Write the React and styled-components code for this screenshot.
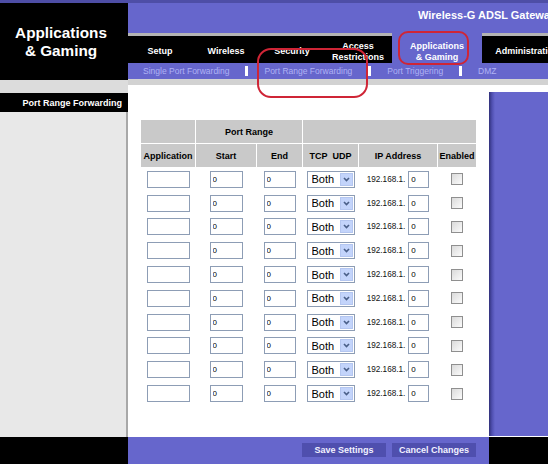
import React from 'react'
import styled, { createGlobalStyle } from 'styled-components'

const colors = {
  purple: '#6666cc',
  lavender: '#b0b2f4',
  black: '#000000',
  tabLine: '#b4b4b4',
  headGrey: '#c9c9c9',
  field: '#8d9db5',
  mark: '#cf2536',
}

const font = `'Liberation Sans', Arial, sans-serif`

const GlobalStyle = createGlobalStyle`
  html, body {
    margin: 0;
    padding: 0;
    background: #fff;
  }

  body {
    font-family: ${font};
  }
`

const SPage = styled.div`
  position: relative;
  width: 548px;
  height: 464px;
  overflow: hidden;
  display: flex;
  flex-direction: column;
`

const STopStrip = styled.div`
  height: 3px;
  flex: none;
  background: #4e4ea6;
`

const SColumns = styled.div`
  flex: 1;
  min-height: 0;
  display: flex;
`

const SSidebar = styled.aside`
  width: 128px;
  flex: none;
  display: flex;
  flex-direction: column;
`

const SSidebarTitle = styled.h1`
  margin: 0;
  height: 77px;
  box-sizing: border-box;
  padding: 21px 6px 0 0;
  background: ${colors.black};
  color: #fff;
  font-size: 15.3px;
  line-height: 18px;
  font-weight: bold;
  text-align: center;
`

const SSidebarGap = styled.div`
  height: 13px;
  background: #dcdcdc;
`

const SSidebarHeading = styled.div`
  height: 19px;
  display: flex;
  align-items: center;
  justify-content: flex-end;
  padding-right: 6px;
  background: ${colors.black};
  color: #fff;
  font-size: 9px;
  font-weight: bold;
`

const SSidebarFill = styled.div`
  flex: 1;
  box-sizing: border-box;
  background: #e8e8e8;
  border-right: 2px solid #a8a8a8;
`

const SSidebarFoot = styled.div`
  height: 27px;
  background: ${colors.black};
`

const SMain = styled.div`
  flex: 1;
  min-width: 0;
  display: flex;
  flex-direction: column;
  overflow: hidden;
`

const SBrandBar = styled.div`
  height: 30px;
  flex: none;
  box-sizing: border-box;
  padding: 6px 0 0 290px;
  background: ${colors.purple};
  color: #fff;
  font-size: 11px;
  line-height: 13px;
  font-weight: bold;
  white-space: nowrap;
`

const STabRow = styled.nav`
  height: 30px;
  flex: none;
  display: flex;
  background: ${colors.purple};
`

const STab = styled.div`
  width: ${({ $w }) => $w}px;
  flex: none;
  box-sizing: border-box;
  display: flex;
  align-items: center;
  justify-content: center;
  padding-top: 4px;
  border-top: 3px solid ${({ $active }) => ($active ? 'transparent' : colors.tabLine)};
  background: ${({ $active }) => ($active ? colors.purple : colors.black)};
  color: #fff;
  font-size: 9px;
  line-height: 11px;
  font-weight: bold;
  text-align: center;
  white-space: nowrap;
`

const SSubNav = styled.div`
  height: 16px;
  flex: none;
  display: flex;
  align-items: center;
  gap: 16px;
  padding-left: 15px;
  background: ${colors.purple};
  color: ${colors.lavender};
  font-size: 8.5px;
  white-space: nowrap;
`

const SSubSep = styled.span`
  width: 3px;
  height: 10px;
  flex: none;
  background: #fff;
`

const SGreyStrip = styled.div`
  height: 6px;
  flex: none;
  background: #d2d2d2;
`

const SBody = styled.div`
  flex: 1;
  min-height: 0;
  display: flex;
`

const SContent = styled.main`
  width: 361px;
  flex: none;
  box-sizing: border-box;
  padding: 35px 0 0 13px;
  background: #fff;
`

const SRail = styled.div`
  flex: 1;
  display: flex;
  padding: 7px 0 1px;
  background: #fff;
`

const SRailPanel = styled.div`
  flex: 1;
  background: linear-gradient(to right, #30307a 0, #4f4fb0 3px, ${colors.purple} 6px);
`

const SFooter = styled.footer`
  height: 27px;
  flex: none;
  display: flex;
`

const SActions = styled.div`
  width: 361px;
  flex: none;
  box-sizing: border-box;
  display: flex;
  align-items: flex-start;
  justify-content: flex-end;
  gap: 6px;
  padding: 6px 13px 0 0;
  background: ${colors.purple};
`

const SButton = styled.button`
  width: 84px;
  height: 14px;
  padding: 0;
  border: none;
  background: #4f4fae;
  color: #f2f2ff;
  font: bold 9px ${font};
`

const SFooterEnd = styled.div`
  flex: 1;
  background: ${colors.black};
`

const STable = styled.div`
  display: grid;
  grid-template-columns: 54px 60px 45px 55px 78px 38px;
  grid-template-rows: 23px 23px;
  grid-auto-rows: 22.8px;
  gap: 1px;
  width: max-content;
`

const SHeadCell = styled.div`
  grid-column: span ${({ $span }) => $span || 1};
  display: flex;
  align-items: center;
  justify-content: center;
  background: ${colors.headGrey};
  font-size: 9px;
  font-weight: bold;
  white-space: nowrap;
`

const SCell = styled.div`
  display: flex;
  align-items: center;
  justify-content: center;
  gap: 3px;
`

const STextInput = styled.input`
  width: ${({ $w }) => $w}px;
  height: 17px;
  box-sizing: border-box;
  margin: 0;
  padding: 0 0 0 2px;
  border: 1px solid ${colors.field};
  background: #fff;
  color: #000;
  font: 8px ${font};
  outline: none;
`

const SSelectBox = styled.div`
  width: 48px;
  height: 17px;
  box-sizing: border-box;
  display: flex;
  align-items: center;
  border: 1px solid ${colors.field};
  background: #fff;
`

const SSelect = styled.select`
  flex: 1;
  min-width: 0;
  height: 100%;
  appearance: none;
  margin: 0;
  padding: 0 0 0 4px;
  border: none;
  background: transparent;
  color: #000;
  font: 11px ${font};
  outline: none;
`

const SSelectArrow = styled.span`
  width: 13px;
  height: 13px;
  flex: none;
  box-sizing: border-box;
  margin-right: 1px;
  display: flex;
  align-items: center;
  justify-content: center;
  border: 1px solid #b4c6f0;
  background: #c3d4fb;
`

const SIpText = styled.span`
  font-size: 8.2px;
  color: #111;
`

const SCheckbox = styled.input.attrs({ type: 'checkbox' })`
  appearance: none;
  width: 12px;
  height: 12px;
  box-sizing: border-box;
  margin: 0;
  border: 1px solid #8f8f8f;
  background: linear-gradient(135deg, #dadada, #fbfbfb);
`

const SMark = styled.div`
  position: absolute;
  left: ${({ $x }) => $x}px;
  top: ${({ $y }) => $y}px;
  width: ${({ $w }) => $w}px;
  height: ${({ $h }) => $h}px;
  box-sizing: border-box;
  border: 2.5px solid ${colors.mark};
  border-radius: ${({ $r }) => $r}px;
  pointer-events: none;
`

const tabs = [
  { label: 'Setup', w: 64 },
  { label: 'Wireless', w: 68 },
  { label: 'Security', w: 64 },
  { label: ['Access', 'Restrictions'], w: 68 },
  { label: ['Applications', '& Gaming'], w: 90, active: true },
  { label: 'Administration', w: 90 },
]

const subLinks = ['Single Port Forwarding', 'Port Range Forwarding', 'Port Triggering', 'DMZ']

const rows = Array.from({ length: 10 }, (_, i) => i)

const Chevron = () => (
  <svg width="7" height="5" viewBox="0 0 7 5">
    <path d="M1 1 L3.5 3.6 L6 1" fill="none" stroke="#4a5f88" strokeWidth="1.6" />
  </svg>
)

const TabLabel = ({ label }) =>
  Array.isArray(label) ? (
    <span>
      {label[0]}
      <br />
      {label[1]}
    </span>
  ) : (
    <span>{label}</span>
  )

const PortRow = () => (
  <>
    <SCell>
      <STextInput $w={43} defaultValue="" />
    </SCell>
    <SCell>
      <STextInput $w={33} defaultValue="0" />
    </SCell>
    <SCell>
      <STextInput $w={32} defaultValue="0" />
    </SCell>
    <SCell>
      <SSelectBox>
        <SSelect defaultValue="both">
          <option value="tcp">TCP</option>
          <option value="udp">UDP</option>
          <option value="both">Both</option>
        </SSelect>
        <SSelectArrow>
          <Chevron />
        </SSelectArrow>
      </SSelectBox>
    </SCell>
    <SCell>
      <SIpText>192.168.1.</SIpText>
      <STextInput $w={21} defaultValue="0" />
    </SCell>
    <SCell>
      <SCheckbox />
    </SCell>
  </>
)

export default function App() {
  return (
    <>
      <GlobalStyle />
      <SPage>
        <STopStrip />
        <SColumns>
          <SSidebar>
            <SSidebarTitle>
              Applications
              <br />
              &amp; Gaming
            </SSidebarTitle>
            <SSidebarGap />
            <SSidebarHeading>Port Range Forwarding</SSidebarHeading>
            <SSidebarFill />
            <SSidebarFoot />
          </SSidebar>

          <SMain>
            <SBrandBar>Wireless-G ADSL Gateway</SBrandBar>
            <STabRow>
              {tabs.map((tab, i) => (
                <STab key={i} $w={tab.w} $active={tab.active}>
                  <TabLabel label={tab.label} />
                </STab>
              ))}
            </STabRow>
            <SSubNav>
              {subLinks.map((link, i) => (
                <React.Fragment key={link}>
                  {i > 0 && <SSubSep />}
                  <span>{link}</span>
                </React.Fragment>
              ))}
            </SSubNav>
            <SGreyStrip />

            <SBody>
              <SContent>
                <STable>
                  <SHeadCell />
                  <SHeadCell $span={2}>Port Range</SHeadCell>
                  <SHeadCell $span={3} />
                  <SHeadCell>Application</SHeadCell>
                  <SHeadCell>Start</SHeadCell>
                  <SHeadCell>End</SHeadCell>
                  <SHeadCell>TCP&nbsp;&nbsp;UDP</SHeadCell>
                  <SHeadCell>IP Address</SHeadCell>
                  <SHeadCell>Enabled</SHeadCell>
                  {rows.map((r) => (
                    <PortRow key={r} />
                  ))}
                </STable>
              </SContent>
              <SRail>
                <SRailPanel />
              </SRail>
            </SBody>

            <SFooter>
              <SActions>
                <SButton type="button">Save Settings</SButton>
                <SButton type="button">Cancel Changes</SButton>
              </SActions>
              <SFooterEnd />
            </SFooter>
          </SMain>
        </SColumns>

        <SMark $x={257} $y={48} $w={111} $h={50} $r={14} />
        <SMark $x={398} $y={31} $w={71} $h={34} $r={10} />
      </SPage>
    </>
  )
}
